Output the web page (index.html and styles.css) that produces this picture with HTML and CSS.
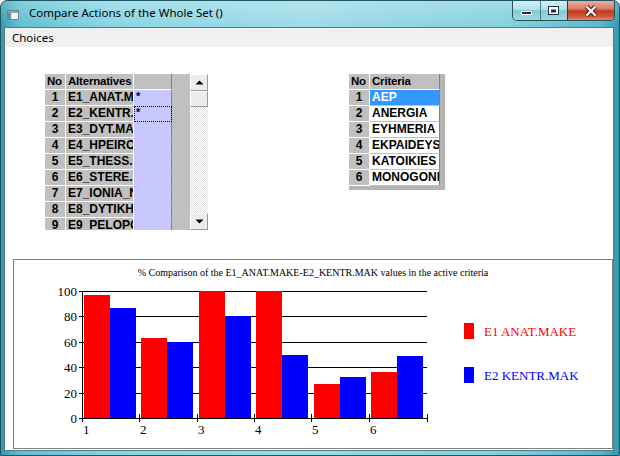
FILE: index.html
```html
<!DOCTYPE html>
<html>
<head>
<meta charset="utf-8">
<title>Compare Actions of the Whole Set ()</title>
<link rel="stylesheet" href="styles.css">
</head>
<body>
<div class="window">
  <div class="titlebar">
    <span class="app-icon">
      <svg width="12" height="10" viewBox="0 0 12 10">
        <rect x="0.5" y="0.5" width="11" height="9" fill="#eef2f3" stroke="#6f8388"/>
        <rect x="1" y="1" width="10" height="2" fill="#8fa6ad"/>
        <rect x="1" y="3" width="3" height="6" fill="#5e8f97"/>
      </svg>
    </span>
    <span class="title">Compare Actions of the Whole Set ()</span>
    <div class="caption-buttons">
      <div class="cbtn cmin">
        <svg width="12" height="6" viewBox="0 0 12 6"><rect x="0.5" y="1.5" width="10" height="3" fill="#17323a" stroke="#fff"/></svg>
      </div>
      <div class="cbtn cmax">
        <svg width="12" height="10" viewBox="0 0 12 10"><rect x="0.5" y="0.5" width="10" height="8" fill="#fff" stroke="#17323a"/><rect x="3" y="3.5" width="5" height="3" fill="#17323a"/></svg>
      </div>
      <div class="cbtn cclose">
        <svg width="14" height="12" viewBox="0 0 14 12"><path d="M2.5 1.5 L11.5 10.5 M11.5 1.5 L2.5 10.5" stroke="#5a1a10" stroke-width="4.5"/><path d="M2.5 1.5 L11.5 10.5 M11.5 1.5 L2.5 10.5" stroke="#fff" stroke-width="2.4"/></svg>
      </div>
    </div>
  </div>

  <div class="client">
    <div class="menubar"><span class="menu-item">Choices</span></div>
    <div class="content">
      <div class="grids">
        <div class="sgrid alt-grid">
          <div class="cells alt-cells">
            <div class="c num hd">No</div><div class="c hd">Alternatives</div><div class="c hd lastcol"></div>
            <div class="c num">1</div><div class="c">E1_ANAT.MAKE</div><div class="c mark">*</div>
            <div class="c num">2</div><div class="c">E2_KENTR.MAK</div><div class="c mark focus">*</div>
            <div class="c num">3</div><div class="c">E3_DYT.MAKE</div><div class="c mark"></div>
            <div class="c num">4</div><div class="c">E4_HPEIROS</div><div class="c mark"></div>
            <div class="c num">5</div><div class="c">E5_THESS.EL</div><div class="c mark"></div>
            <div class="c num">6</div><div class="c">E6_STERE.EL</div><div class="c mark"></div>
            <div class="c num">7</div><div class="c">E7_IONIA_NHSIA</div><div class="c mark"></div>
            <div class="c num">8</div><div class="c">E8_DYTIKH.EL</div><div class="c mark"></div>
            <div class="c num">9</div><div class="c">E9_PELOPONNHSOS</div><div class="c mark"></div>
          </div>
          <div class="filler"></div>
          <div class="vscroll">
            <div class="sbtn">
              <svg width="9" height="5" viewBox="0 0 9 5"><polygon points="0.5,4.5 8.5,4.5 4.5,0.5" fill="#000"/></svg>
            </div>
            <div class="sbtn thumb"></div>
            <div class="track"></div>
            <div class="sbtn">
              <svg width="9" height="5" viewBox="0 0 9 5"><polygon points="0.5,0.5 8.5,0.5 4.5,4.5" fill="#000"/></svg>
            </div>
          </div>
        </div>

        <div class="sgrid crit-grid">
          <div class="cells crit-cells">
            <div class="c num hd">No</div><div class="c hd critcol">Criteria</div>
            <div class="c num">1</div><div class="c data critcol sel">AEP</div>
            <div class="c num">2</div><div class="c data critcol">ANERGIA</div>
            <div class="c num">3</div><div class="c data critcol">EYHMERIA</div>
            <div class="c num">4</div><div class="c data critcol">EKPAIDEYSH</div>
            <div class="c num">5</div><div class="c data critcol">KATOIKIES</div>
            <div class="c num">6</div><div class="c data critcol">MONOGONEIA</div>
          </div>
        </div>
      </div>

      <div class="chart">
        <svg class="plot" width="598" height="188" viewBox="14 260 598 188">
          <text class="ctitle" x="313" y="276" text-anchor="middle">% Comparison of the E1_ANAT.MAKE-E2_KENTR.MAK values in the active criteria</text>
          <g stroke="#000" stroke-width="1" shape-rendering="crispEdges">
            <line x1="79" y1="291.5" x2="427" y2="291.5"/>
            <line x1="79" y1="316.5" x2="427" y2="316.5"/>
            <line x1="79" y1="342.5" x2="427" y2="342.5"/>
            <line x1="79" y1="367.5" x2="427" y2="367.5"/>
            <line x1="79" y1="393.5" x2="427" y2="393.5"/>
          </g>
          <g fill="#ff0000">
            <rect x="84" y="295" width="26" height="123"/>
            <rect x="141" y="338" width="26" height="80"/>
            <rect x="199" y="291" width="26" height="127"/>
            <rect x="256" y="291" width="26" height="127"/>
            <rect x="314" y="384" width="26" height="34"/>
            <rect x="371" y="372" width="26" height="46"/>
          </g>
          <g fill="#0000ff">
            <rect x="110" y="308" width="26" height="110"/>
            <rect x="167" y="342" width="26" height="76"/>
            <rect x="225" y="316" width="26" height="102"/>
            <rect x="282" y="355" width="26" height="63"/>
            <rect x="340" y="377" width="26" height="41"/>
            <rect x="397" y="356" width="26" height="62"/>
          </g>
          <g stroke="#000" stroke-width="1" shape-rendering="crispEdges">
            <line x1="82.5" y1="291" x2="82.5" y2="419"/>
            <line x1="79" y1="418.5" x2="428" y2="418.5"/>
            <line x1="82.5" y1="414" x2="82.5" y2="422"/>
            <line x1="139.5" y1="414" x2="139.5" y2="422"/>
            <line x1="197.5" y1="414" x2="197.5" y2="422"/>
            <line x1="254.5" y1="414" x2="254.5" y2="422"/>
            <line x1="311.5" y1="414" x2="311.5" y2="422"/>
            <line x1="369.5" y1="414" x2="369.5" y2="422"/>
            <line x1="427.5" y1="414" x2="427.5" y2="422"/>
          </g>
          <g class="axlbl" text-anchor="end">
            <text x="77" y="296">100</text>
            <text x="77" y="321">80</text>
            <text x="77" y="347">60</text>
            <text x="77" y="372">40</text>
            <text x="77" y="398">20</text>
            <text x="77" y="423">0</text>
          </g>
          <g class="axlbl">
            <text x="83" y="434">1</text>
            <text x="140" y="434">2</text>
            <text x="198" y="434">3</text>
            <text x="255" y="434">4</text>
            <text x="312" y="434">5</text>
            <text x="370" y="434">6</text>
          </g>
          <rect x="464" y="323" width="10" height="16" fill="#ff0000"/>
          <text class="legend" x="484" y="336" fill="#ff0000">E1 ANAT.MAKE</text>
          <rect x="464" y="367" width="10" height="16" fill="#0000ff"/>
          <text class="legend" x="484" y="380" fill="#0000ff">E2 KENTR.MAK</text>
        </svg>
      </div>
    </div>
  </div>
</div>
</body>
</html>
```

FILE: styles.css
```css
* { box-sizing: border-box; }
html, body { margin: 0; padding: 0; }
body {
  width: 620px;
  height: 456px;
  overflow: hidden;
  background: #ffffff;
  font-family: "Liberation Sans", Arial, sans-serif;
}

.window {
  width: 620px;
  height: 456px;
  display: flex;
  flex-direction: column;
  padding: 0 5px 4px 3px;
  border: 1px solid #1f5562;
  border-radius: 7px 7px 0 0;
  background:
    linear-gradient(180deg, rgba(255,255,255,0.25) 0, rgba(255,255,255,0) 26px),
    linear-gradient(90deg, #3499ae 0, #5fbfd2 3%, #8ad5e3 18%, #9bdbe7 50%, #84d0df 82%, #56b7ca 97%, #3497ab 100%);
}

/* ---------- title bar ---------- */
.titlebar {
  height: 26px;
  flex: none;
  display: flex;
  align-items: flex-start;
}
.app-icon {
  display: block;
  width: 12px;
  height: 10px;
  margin: 9px 0 0 3px;
}
.app-icon svg { display: block; }
.title {
  margin: 4px 0 0 10px;
  font-family: "Noto Sans", "Open Sans", sans-serif;
  font-size: 11.5px;
  line-height: 16px;
  color: #000;
  white-space: nowrap;
}
.caption-buttons {
  margin-left: auto;
  margin-right: -1px;
  display: flex;
  height: 20px;
  border: 1px solid #2a4f59;
  border-top: none;
  border-radius: 0 0 5px 5px;
  overflow: hidden;
}
.cbtn {
  display: flex;
  align-items: center;
  justify-content: center;
  height: 100%;
}
.cbtn svg { display: block; }
.cmin, .cmax {
  background: linear-gradient(180deg, #d4f0f5 0, #b1e0e9 45%, #86c9d6 50%, #9fd8e3 100%);
}
.cmin { width: 28px; padding-top: 5px; border-right: 1px solid #4b7c87; }
.cmax { width: 26px; }
.cclose {
  width: 47px;
  border-left: 1px solid #5c2a22;
  background: linear-gradient(180deg, #eab1a2 0, #d87a64 42%, #c2381d 52%, #cf5337 80%, #e08c70 100%);
}

/* ---------- client ---------- */
.client {
  flex: 1;
  display: flex;
  flex-direction: column;
  background: #ffffff;
  border: 1px solid #4f7c87;
}
.menubar {
  height: 19px;
  flex: none;
  background: #f0f0f0;
  padding-left: 7px;
}
.menu-item {
  font-family: "Noto Sans", "Open Sans", sans-serif;
  font-size: 11.5px;
  line-height: 19px;
  color: #000;
}
.content {
  flex: 1;
  display: flex;
  flex-direction: column;
}
.grids {
  height: 212px;
  flex: none;
  display: flex;
  align-items: flex-start;
  gap: 141px;
  padding: 27px 0 0 40px;
}

/* ---------- string grids ---------- */
.sgrid {
  display: flex;
  overflow: hidden;
  flex: none;
}
.alt-grid { width: 163px; height: 156px; background: #c0c0c0; }
.crit-grid { width: 96px; height: 116px; background: #b4b4b4; }

.cells {
  display: grid;
  grid-auto-rows: 16px;
  flex: none;
  align-content: start;
}
.alt-cells { grid-template-columns: 21px 68px 38px; }
.crit-cells { grid-template-columns: 21px 70px; }

.c {
  overflow: hidden;
  white-space: nowrap;
  font: bold 12px/15px "Liberation Sans", Arial, sans-serif;
  color: #000;
  padding-left: 2px;
  background: #c0c0c0;
  border-right: 1px solid #ffffff;
  border-bottom: 1px solid #ffffff;
}
.c.hd { font-size: 11.5px; letter-spacing: -0.2px; }
.c.num { padding-left: 0; text-align: center; }
.c.num.hd { text-align: left; padding-left: 2px; }
.c.lastcol { border-right-color: #808080; }
.c.mark {
  background: #c8c8ff;
  border-bottom-color: #c8c8ff;
  border-right-color: #808080;
  font-size: 11px;
  line-height: 13px;
}
.c.focus {
  outline: 1px dotted #000;
  outline-offset: -1px;
}
.c.data { background: #ffffff; border-bottom-color: #c0c0c0; }
.c.critcol { border-right-color: #808080; }
.c.sel { background: #3399ff; color: #ffffff; border-bottom-color: #c0c0c0; }

.filler {
  width: 18px;
  flex: none;
  background: #c0c0c0;
}

/* ---------- scrollbar ---------- */
.vscroll {
  width: 18px;
  flex: none;
  display: flex;
  flex-direction: column;
  background: repeating-conic-gradient(#ffffff 0 25%, #e2e2e2 0 50%) 0 0 / 2px 2px;
}
.sbtn {
  height: 17px;
  flex: none;
  display: flex;
  align-items: center;
  justify-content: center;
  background: #ececec;
  border: 1px solid;
  border-color: #ffffff #9a9a9a #9a9a9a #ffffff;
}
.sbtn svg { display: block; }
.thumb { height: 16px; }
.track { flex: 1; }

/* ---------- chart ---------- */
.chart {
  width: 600px;
  height: 190px;
  flex: none;
  margin-left: 8px;
  border: 1px solid #7e7e7e;
  background: #ffffff;
}
.plot { display: block; }
.ctitle {
  font-family: "Liberation Serif", "Times New Roman", serif;
  font-size: 10px;
  fill: #000;
}
.axlbl {
  font-family: "Liberation Serif", "Times New Roman", serif;
  font-size: 13px;
  fill: #000;
}
.legend {
  font-family: "Liberation Serif", "Times New Roman", serif;
  font-size: 13px;
}
```
